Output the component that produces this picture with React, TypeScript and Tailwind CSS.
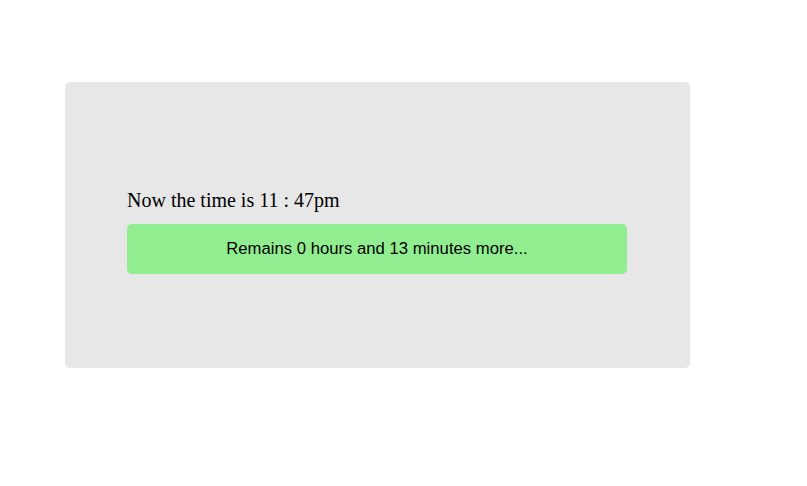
export default function App() {
  return (
    <div className="min-h-[486px] w-[807px] bg-white pt-[82px] pl-[65px]">
      <div className="w-[625px] h-[286px] rounded-[5px] bg-[#e7e7e7] pl-[62px] pt-[107px]">
        <div className="font-['Liberation_Serif',serif] text-[20px] leading-[23px] text-black">
          Now the time is 11 : 47pm
        </div>
        <div className="mt-[12px] flex h-[50px] w-[500px] items-center justify-center rounded-[5px] bg-[#90ee90] font-['Liberation_Sans',Arial,sans-serif] text-[16.7px] text-black">
          Remains 0 hours and 13 minutes more...
        </div>
      </div>
    </div>
  );
}
